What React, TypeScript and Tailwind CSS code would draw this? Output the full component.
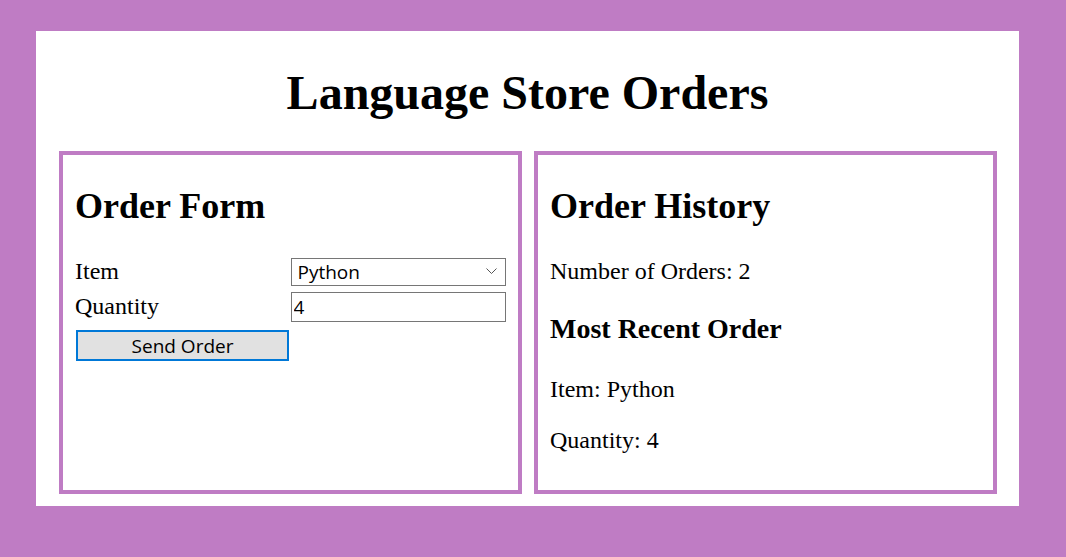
import React from "react";

const serif = { fontFamily: '"Liberation Serif", "Times New Roman", serif' };
const sans = { fontFamily: '"Open Sans", "Noto Sans", sans-serif' };

export default function App() {
  return (
    <div className="min-h-[557px] bg-[#bf7cc4] pt-[31px] pl-[36px] text-black" style={serif}>
      <div className="w-[983px] h-[475px] bg-white flex flex-col">
        <h1 className="text-[48px] font-bold leading-[55px] text-center mt-[34px] mb-[31px]">
          Language Store Orders
        </h1>
        <div className="grid grid-cols-[463px_463px] gap-[12px] pl-[23px]">
          <section className="border-4 border-[#bf7cc4] h-[343px] px-[12px]">
            <h2 className="text-[36px] font-bold leading-[41px] mt-[31px] mb-[30px]">Order Form</h2>
            <div className="grid grid-cols-2 gap-y-[7px] text-[24px] leading-[28px]">
              <label>Item</label>
              <div className="relative h-[28px]">
                <select
                  className="appearance-none w-full h-[28px] border border-[#767676] bg-white pl-[6px] text-[19px] leading-[26px] outline-none"
                  style={sans}
                  defaultValue="Python"
                >
                  <option>Python</option>
                  <option>JavaScript</option>
                  <option>Rust</option>
                </select>
                <svg
                  className="absolute right-[9px] top-[11px] pointer-events-none"
                  width="11"
                  height="6"
                  viewBox="0 0 11 6"
                  fill="none"
                >
                  <path d="M0.5 0.5 L5.5 5.5 L10.5 0.5" stroke="#555" strokeWidth="1" />
                </svg>
              </div>
              <label>Quantity</label>
              <input
                className="w-full h-[30px] border border-[#767676] px-[2px] text-[19px] outline-none"
                style={sans}
                defaultValue="4"
              />
              <button
                className="ml-[1px] mt-[1px] w-[213px] h-[31px] border-2 border-[#0078d7] bg-[#e1e1e1] text-[19px] leading-[26px]"
                style={sans}
              >
                Send Order
              </button>
            </div>
          </section>
          <section className="border-4 border-[#bf7cc4] h-[343px] px-[12px]">
            <h2 className="text-[36px] font-bold leading-[41px] mt-[31px] mb-[30px]">Order History</h2>
            <p className="text-[24px] leading-[28px]">Number of Orders: 2</p>
            <h3 className="text-[28px] font-bold leading-[32px] mt-[28px]">Most Recent Order</h3>
            <p className="text-[24px] leading-[28px] mt-[30px]">Item: Python</p>
            <p className="text-[24px] leading-[28px] mt-[23px]">Quantity: 4</p>
          </section>
        </div>
      </div>
    </div>
  );
}
